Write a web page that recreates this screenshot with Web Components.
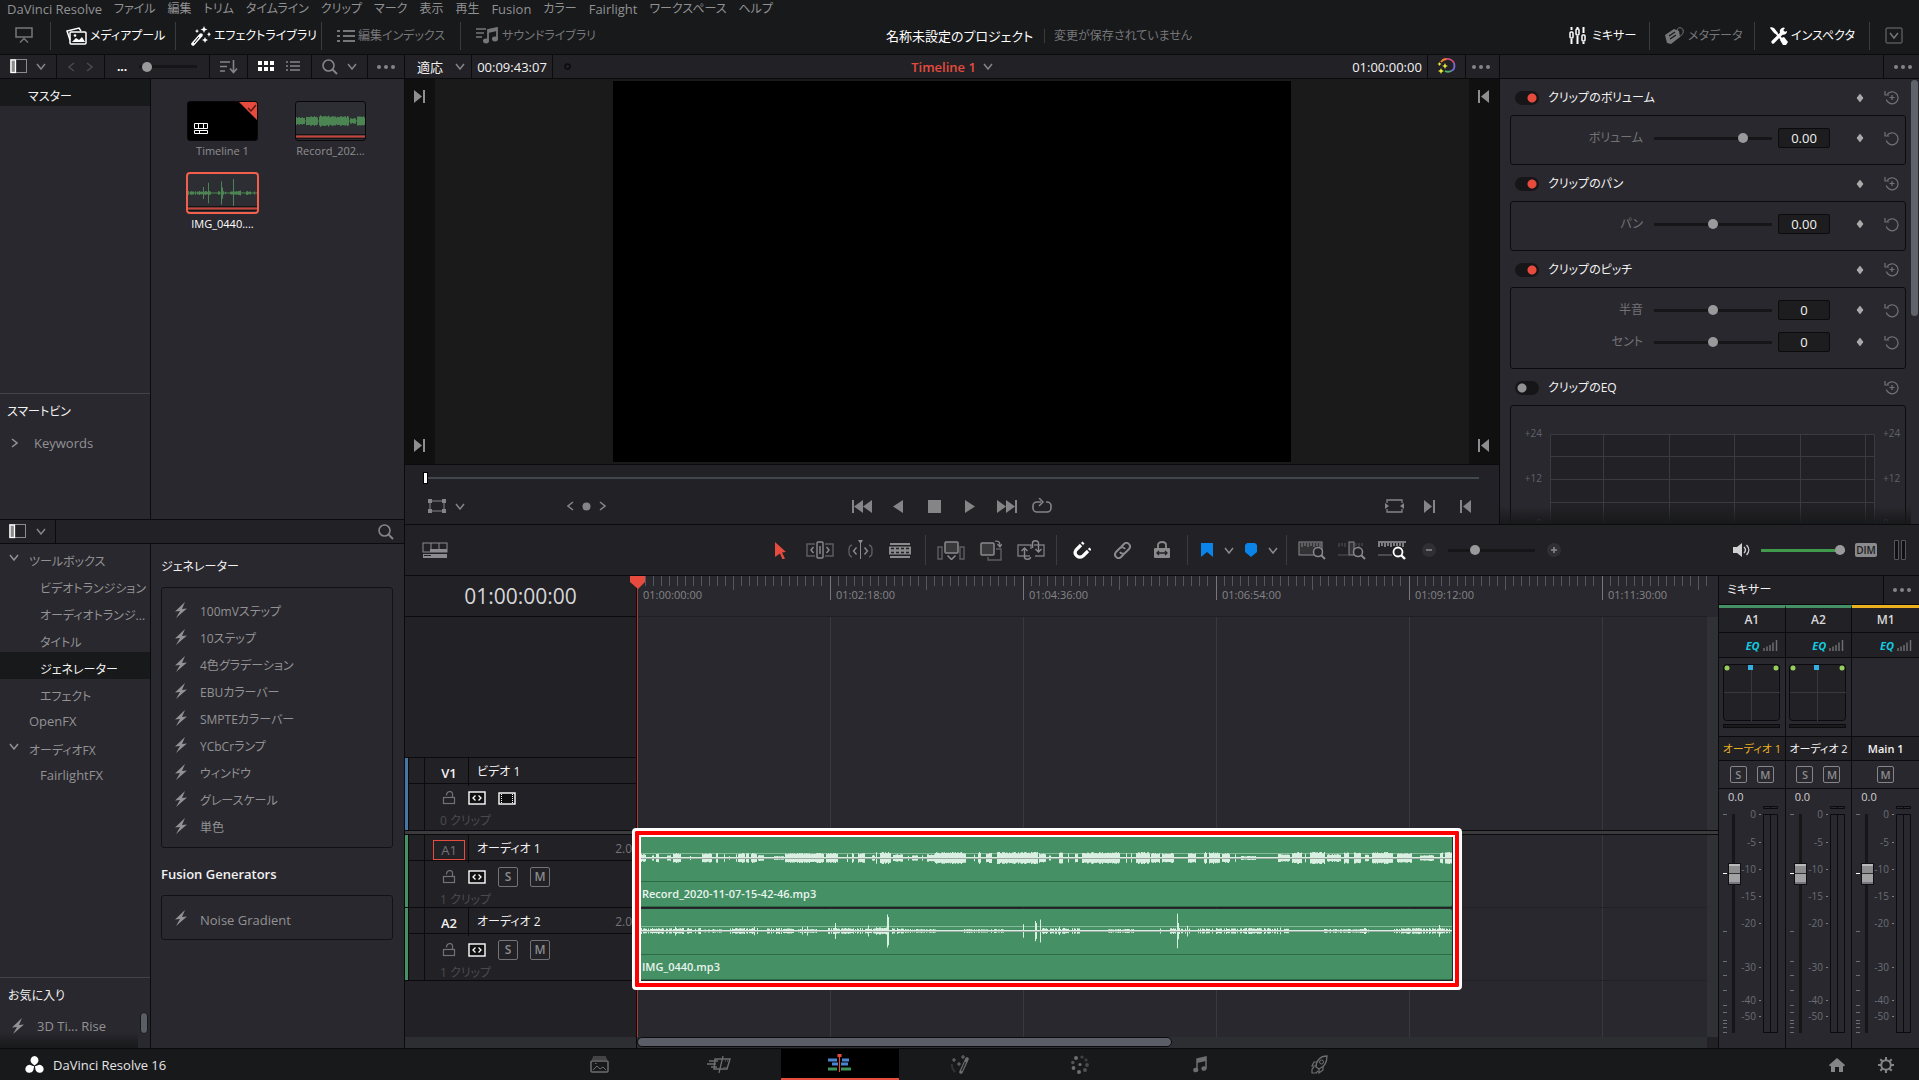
<!DOCTYPE html>
<html lang="ja">
<head>
<meta charset="utf-8">
<title>DaVinci Resolve</title>
<style>
    html, body {
        margin: 0;
        height: 100%;
        background: #18191b;
    }

    body {
        font: 12px/16px "Open Sans", "Noto Sans CJK JP", sans-serif;
        font-feature-settings: "palt";
        color: #929294;
        overflow: hidden;

        --line: #0b0b0d;
        --panel: #29282e;
        --bar: #222126;
        --dark: #18191b;
        --red: #e64b3d;
        --green: #469065;
        --bright: #f2f2f2;
    }
</style>
</head>
<body>
<resolve-app>
    <app-menu slot="menu"></app-menu>
    <app-toolbar slot="toolbar"></app-toolbar>
    <media-pool slot="pool"></media-pool>
    <effects-library slot="effects"></effects-library>
    <timeline-viewer slot="viewer"></timeline-viewer>
    <clip-inspector slot="inspector">
        <inspector-section heading="クリップのボリューム" on keyframe>
            <param-row label="ボリューム" value="0.00" position="78"></param-row>
        </inspector-section>
        <inspector-section heading="クリップのパン" on keyframe>
            <param-row label="パン" value="0.00" position="50"></param-row>
        </inspector-section>
        <inspector-section heading="クリップのピッチ" on keyframe>
            <param-row label="半音" value="0" position="50"></param-row>
            <param-row label="セント" value="0" position="50"></param-row>
        </inspector-section>
        <inspector-section heading="クリップのEQ">
            <eq-graph></eq-graph>
        </inspector-section>
    </clip-inspector>
    <edit-tools slot="tools"></edit-tools>
    <timeline-editor slot="timeline"></timeline-editor>
    <audio-mixer slot="mixer">
        <mixer-strip tag="A1" name="オーディオ 1" selected></mixer-strip>
        <mixer-strip tag="A2" name="オーディオ 2"></mixer-strip>
        <mixer-strip tag="M1" name="Main 1" main></mixer-strip>
    </audio-mixer>
    <page-switcher slot="pages"></page-switcher>
</resolve-app>

<script>
// width, height, body
const ICONS = {
    monitor: [18, 17, `<path d="M1 1h16v9H1z M5 15.500l4-4 4 4" fill="none" stroke="currentColor" stroke-width="1.500"/>`],
    media: [21, 18, `<path d="M4 13L1 4l12-3 2 3" fill="none" stroke="currentColor" stroke-width="1.500"/><rect x="4" y="5" width="16" height="12" rx="1" fill="none" stroke="currentColor" stroke-width="1.500"/><path d="M6 15l4-4 3 2 3-3 3 5z" fill="currentColor"/><circle cx="9" cy="8.500" r="1.300" fill="currentColor"/>`],
    wand: [20, 20, `<path d="M2 18L10 9" stroke="currentColor" stroke-width="3.500" stroke-linecap="round"/><path d="M3 17l5-6" stroke="#18191b" stroke-width="1"/><path d="M13 0l1 2.500 2.500 1-2.500 1-1 2.500-1-2.500-2.500-1 2.500-1z M18 6l.7 1.600 1.300.7-1.300.7L18 11l-.7-2-1.300-.7 1.300-.7z M6 3l.7 1.500L8 5l-1.300.7L6 7l-.7-1.300L4 5l1.300-.5z M14 11l.9 2.100 2.100.9-2.100.9-.9 2.100-.9-2.100L11 14l2.100-.9z" fill="currentColor"/>`],
    index: [18, 14, `<path d="M0 2h3M0 7h3M0 12h3M6 2h12M6 7h12M6 12h12" stroke="currentColor" stroke-width="1.800"/>`],
    sound: [23, 17, `<path d="M0 2h10M0 6h8M0 10h6" stroke="currentColor" stroke-width="1.600"/><path d="M12 14V3l9-2v11" fill="none" stroke="currentColor" stroke-width="1.800"/><path d="M12 3.500l9-2V4l-9 2z" fill="currentColor"/><ellipse cx="10" cy="14" rx="3" ry="2.400" fill="currentColor"/><ellipse cx="19" cy="12" rx="3" ry="2.400" fill="currentColor"/>`],
    mixer: [17, 17, `<path d="M2.500 0v3M2.500 12v5M8.500 0v2M8.500 9v8M14.500 0v6M14.500 15v2" stroke="currentColor" stroke-width="2"/><rect x="1" y="5" width="3" height="6" rx="1" fill="none" stroke="currentColor" stroke-width="1.500"/><rect x="7" y="2" width="3" height="6" rx="1" fill="none" stroke="currentColor" stroke-width="1.500"/><rect x="13" y="8" width="3" height="6" rx="1" fill="none" stroke="currentColor" stroke-width="1.500"/>`],
    tag: [20, 17, `<path d="M0 8l9-6 5 2 1 6-9 7-4-1z" fill="currentColor"/><path d="M4 9l6-4M5 12l6-4" stroke="#18191b" stroke-width="1.300"/><path d="M13 7l-1-4c1-3 5-3 6 0s-1 5-4 7" fill="none" stroke="currentColor"/>`],
    tools: [18, 18, `<path d="M1 0l3 1 4 5-1 2-3-2-4-5z" fill="currentColor"/><path d="M7 7l7 8" stroke="currentColor" stroke-width="2"/><path d="M11 11l3-1 4 5-2 3-3 0-3-5z" fill="currentColor"/><path d="M3 15L13 5" stroke="currentColor" stroke-width="3.200" stroke-linecap="round"/><path d="M15 1a3.600 3.600 0 1 0 2 3l-2.500 1-1.500-1.500z" fill="currentColor"/>`],
    boxdown: [18, 17, `<rect x="1" y="1" width="16" height="15" rx="1" fill="none" stroke="currentColor"/><path d="M5 6l4 5 4-5" fill="none" stroke="currentColor" stroke-width="1.500"/>`],
    sidebar: [17, 15, `<rect x=".5" y=".5" width="16" height="13" fill="none" stroke="#8b8b8d"/><rect x="1" y="1" width="4.500" height="12.500" fill="#8b8b8d" stroke="#fff" stroke-width="1.300"/>`],
    down: [10, 7, `<path d="M1 1l4 5 4-5" fill="none" stroke="currentColor" stroke-width="1.500"/>`],
    left: [7, 10, `<path d="M6 1L1 5l5 4" fill="none" stroke="currentColor" stroke-width="1.500"/>`],
    right: [7, 10, `<path d="M1 1l5 4-5 4" fill="none" stroke="currentColor" stroke-width="1.500"/>`],
    sort: [18, 14, `<path d="M0 2h10M0 6.500h7M0 11h5" stroke="currentColor" stroke-width="1.500"/><path d="M13.500 0v12M10 8.500l3.500 4 3.500-4" fill="none" stroke="currentColor" stroke-width="1.600"/>`],
    grid: [17, 11, `<path d="M0 0h4v4H0zM6 0h4v4H6zM12 0h4v4h-4zM0 6h4v4H0zM6 6h4v4H6zM12 6h4v4h-4z" fill="currentColor"/>`],
    list: [15, 11, `<path d="M0 1h2M0 5h2M0 9h2M4 1h10M4 5h10M4 9h10" stroke="currentColor" stroke-width="1.600"/>`],
    search: [16, 16, `<circle cx="6.500" cy="6.500" r="5.500" fill="none" stroke="currentColor" stroke-width="1.600"/><path d="M10.500 10.500l4.500 4.500" stroke="currentColor" stroke-width="2"/>`],
    dots: [18, 4, `<circle cx="2" cy="2" r="2" fill="currentColor"/><circle cx="9" cy="2" r="2" fill="currentColor"/><circle cx="16" cy="2" r="2" fill="currentColor"/>`],
    ring: [7, 7, `<circle cx="3.500" cy="3.500" r="2.500" fill="none" stroke="#0b0b0d" stroke-width="1.500"/>`],
    wheel: [19, 17, `<path d="M4 4a7 7 0 0 1 6-3" fill="none" stroke="#f08030" stroke-width="1.800"/><path d="M9 1c4-.5 7 2 8 4" fill="none" stroke="#d34a7c" stroke-width="1.800"/><path d="M17 5c1 4 0 7-3 8" fill="none" stroke="#7a6ad8" stroke-width="1.800"/><path d="M14 13c-2 1-4 1-6 0" fill="none" stroke="#4bb070" stroke-width="1.800"/><path d="M8 5l1 2.200 2 .8-2 .8L8 11l-1-2.200L5 8l2-.8zM2.500 4l.7 1.300L4.500 6l-1.300.7L2.500 8l-.7-1.300L.5 6l1.300-.7zM4 10l.9 2.100L7 13l-2.100.9L4 16l-.9-2.100L1 13l2.100-.9z" fill="#e8e83c"/>`],
    toEnd: [12, 13, `<path d="M0 0l8 6.500-8 6.500z" fill="currentColor"/><path d="M10 0v13" stroke="currentColor" stroke-width="2"/>`],
    toStart: [12, 13, `<path d="M11 0L3 6.500l8 6.500z" fill="currentColor"/><path d="M1 0v13" stroke="currentColor" stroke-width="2"/>`],
    first: [21, 13, `<path d="M1 0v13" stroke="currentColor" stroke-width="2"/><path d="M11 0L2 6.500l9 6.500zM20 0l-9 6.500 9 6.500z" fill="currentColor"/>`],
    last: [21, 13, `<path d="M20 0v13" stroke="currentColor" stroke-width="2"/><path d="M1 0l9 6.500L1 13zM10 0l9 6.500-9 6.500z" fill="currentColor"/>`],
    back: [11, 13, `<path d="M10 0L0 6.500 10 13z" fill="currentColor"/>`],
    play: [11, 13, `<path d="M0 0l10 6.500L0 13z" fill="currentColor"/>`],
    stop: [13, 13, `<path d="M0 0h13v13H0z" fill="currentColor"/>`],
    loop: [20, 16, `<path d="M9 4H5a4 4 0 0 0-4 4v2a4 4 0 0 0 4 4h10a4 4 0 0 0 4-4V8a4 4 0 0 0-4-4h-1" fill="none" stroke="currentColor" stroke-width="1.600"/><path d="M7 0l4 4-4 4" fill="none" stroke="currentColor" stroke-width="1.500"/>`],
    dot: [9, 9, `<circle cx="4.500" cy="4.500" r="4" fill="currentColor"/>`],
    transform: [18, 14, `<rect x="2" y="2" width="14" height="10" fill="none" stroke="currentColor"/><path d="M0 0h4v4H0zM14 0h4v4h-4zM0 10h4v4H0zM14 10h4v4h-4z" fill="currentColor"/>`],
    fit: [19, 14, `<path d="M2 4V1h15v3M2 10v3h15v-3" fill="none" stroke="currentColor" stroke-width="1.300"/><path d="M0 4l4 3-4 3zM19 4l-4 3 4 3z" fill="currentColor"/>`],
    diamond: [10, 12, `<path d="M5 1l4 5-4 5-4-5z" fill="#a9a9ab" stroke="#18191b" stroke-width=".8"/>`],
    reset: [15, 15, `<path d="M3 4.500A6 6 0 1 1 2.300 9.500" fill="none" stroke="currentColor" stroke-width="1.200"/><path d="M1 1v4h4" fill="none" stroke="currentColor" stroke-width="1.200"/>`],
    resetAll: [15, 15, `<path d="M3 4.500A6 6 0 1 1 2.300 9.500" fill="none" stroke="currentColor" stroke-width="1.200"/><path d="M1 1v4h4M8 5v5M5.500 7.500h5" fill="none" stroke="currentColor" stroke-width="1.200"/>`],
    bolt: [12, 16, `<path d="M10 0L0 9.500l5-.5-4 7L12 6.500 7 7z" fill="currentColor"/>`],
    options: [26, 16, `<rect x="1" y="1" width="24" height="9" fill="none" stroke="currentColor"/><path d="M9 1v6M17 1v6" stroke="currentColor"/><path d="M8 7h17v3H8zM1 12h24v4H1z" fill="currentColor"/><path d="M2 13.500h7" stroke="#222126"/>`],
    arrow: [11, 17, `<path d="M0 0l11 10-4 .5 3 6-2.500 1L5 11.500 0 15z" fill="#e64b3d"/>`],
    trim: [28, 18, `<path d="M9 3H1v12h8M19 3h8v12h-8" fill="none" stroke="#5e5e60" stroke-width="1.400"/><rect x="11" y="1" width="6" height="16" rx="1" fill="none" stroke="currentColor" stroke-width="1.400"/><path d="M14 5v8M7.500 6L5 9l2.500 3M20.500 6L23 9l-2.500 3" fill="none" stroke="currentColor" stroke-width="1.400"/>`],
    dynamic: [25, 20, `<path d="M4 5c-3 1-3 3-3 6s0 5 3 6M21 5c3 1 3 3 3 6s0 5-3 6" fill="none" stroke="#5e5e60" stroke-width="1.400"/><path d="M10 0h5l-2.500 4zM12 3h1v16h-1z" fill="currentColor"/><path d="M8.500 7.500L5.500 11l3 3.500M16.500 7.500l3 3.500-3 3.500" fill="none" stroke="currentColor" stroke-width="1.400"/>`],
    blade: [22, 15, `<path d="M1 1h20M1 14h20" stroke="currentColor" stroke-width="1.800"/><path d="M0 3.500h22v8H0z" fill="currentColor"/><path d="M2 5.500h18M2 9.500h18" stroke="#222126" stroke-width="1.500" stroke-dasharray="3 2"/>`],
    insert: [28, 19, `<rect x="8" y="1" width="13" height="11" rx="1" fill="#39393c" stroke="currentColor" stroke-width="1.500"/><path d="M5 6H1v12h4zM23 6h4v12h-4z" fill="none" stroke="#5e5e60" stroke-width="1.400"/><path d="M10.500 14.500l4 4 4-4" fill="none" stroke="currentColor" stroke-width="1.500"/>`],
    overwrite: [22, 21, `<rect x="1" y="3" width="13" height="12" rx="1" fill="#39393c" stroke="currentColor" stroke-width="1.500"/><path d="M16 9h5v11H8v-3" fill="none" stroke="#5e5e60" stroke-width="1.400"/><path d="M15 1c4 0 5 1 5 5M17.500 4l2.500 3 2-3" fill="none" stroke="currentColor" stroke-width="1.200"/>`],
    replace: [28, 20, `<path d="M13 16H1V5h13v4M17 5h10v11h-9" fill="none" stroke="#777779" stroke-width="1.400"/><path d="M7.500 18V8M4.500 11l3-3 3 3M7.500 17c0 3 6 3 6 0M21.500 3v9M18.500 9l3 3 3-3M21.500 3c0-3-6-3-6 0v5" fill="none" stroke="currentColor" stroke-width="1.400"/>`],
    magnet: [18, 18, `<path d="M8 4L3 9c-3 5 3 9 7 6l5-5" fill="none" stroke="currentColor" stroke-width="3.200"/><path d="M9 3l1.500-1.500M16 9l1.500-1.500" stroke="currentColor" stroke-width="3"/>`],
    link: [17, 17, `<g fill="none" stroke="currentColor" stroke-width="2"><path d="M7 5l3-3c3-3 8 1 5 5l-4 4c-1 1-4 1-5-1"/><path d="M10 12l-3 3c-3 3-8-1-5-5l4-4c1-1 4-1 5 1"/></g>`],
    lockpos: [16, 18, `<path d="M4 8V4c0-4 8-4 8 0v4" fill="none" stroke="currentColor" stroke-width="1.800"/><rect y="7" width="16" height="10" rx="1" fill="currentColor"/><path d="M3 12h10M5 10l-2 2 2 2M11 10l2 2-2 2" fill="none" stroke="#222126" stroke-width="1.300"/>`],
    flag: [12, 14, `<path d="M0 0h12v14l-6-5-6 5z" fill="#0a84e8"/>`],
    marker: [12, 14, `<path d="M2 0h8l2 2v7l-6 5-6-5V2z" fill="#0a84e8"/>`],
    zoomFull: [28, 19, `<rect x="1" y="1" width="23" height="13" fill="#333336" stroke="currentColor"/><path d="M4 2v4M7 2v3M10 2v4M13 2v3M16 2v4M19 2v3M22 2v4" stroke="currentColor"/><circle cx="20" cy="11" r="4.500" fill="#222126" stroke="currentColor" stroke-width="1.500"/><path d="M23 14l4 4" stroke="currentColor" stroke-width="2"/>`],
    zoomDetail: [28, 19, `<path d="M1 2v4M4 2v3M7 2v4M18 2v3M21 2v4M24 2v3M0 14h10" stroke="#555557"/><rect x="11" y="1" width="5" height="13" fill="#333336" stroke="currentColor"/><circle cx="20" cy="11" r="4.500" fill="#222126" stroke="currentColor" stroke-width="1.500"/><path d="M23 14l4 4" stroke="currentColor" stroke-width="2"/>`],
    zoomCustom: [28, 19, `<path d="M0 1h28M1 2v4M4 2v3M7 2v4M10 2v3M13 2v4M16 2v3M19 2v3M22 2v3M25 2v4" stroke="#d8d8d8"/><path d="M0 14h14" stroke="#777"/><circle cx="20" cy="11" r="4.500" fill="#222126" stroke="currentColor" stroke-width="1.800"/><path d="M23 14l4 4" stroke="currentColor" stroke-width="2.400"/>`],
    minus: [14, 14, `<circle cx="7" cy="7" r="7" fill="#303034"/><path d="M4 7h6" stroke="currentColor" stroke-width="1.500"/>`],
    plus: [14, 14, `<circle cx="7" cy="7" r="7" fill="#303034"/><path d="M4 7h6M7 4v6" stroke="currentColor" stroke-width="1.500"/>`],
    speaker: [18, 14, `<path d="M0 4h4l5-4v14l-5-4H0z" fill="currentColor"/><path d="M11 4c2 2 2 4 0 6M13.500 2c3 3 3 7 0 10" fill="none" stroke="currentColor" stroke-width="1.400"/>`],
    meters: [12, 20, `<path d="M.5.500h4v19h-4zM7.500.500h4v19h-4z" fill="#101012" stroke="#55565a"/>`],
    lock: [14, 14, `<rect x="1.500" y="6.500" width="11" height="6" fill="none" stroke="currentColor" stroke-width="1.200"/><path d="M4.500 4.500c0-5 6-5 6-1.500v3" fill="none" stroke="currentColor" stroke-width="1.200"/>`],
    auto: [18, 14, `<rect x="1" y="1" width="16" height="12" fill="#101012" stroke="#fff" stroke-width="1.400"/><path d="M7.500 4.500L5 7l2.500 2.500M10.500 4.500L13 7l-2.500 2.500" fill="none" stroke="#fff" stroke-width="1.300"/>`],
    film: [18, 13, `<rect x="1" y="1" width="16" height="11" fill="#101012" stroke="#fff" stroke-width="1.400"/><path d="M3.500 2v9M14.500 2v9" stroke="#fff" stroke-dasharray="1 1"/>`],
    signal: [15, 11, `<path d="M1 8v3M4 6.500V11M7 5v6M10 2.500V11M13.500 0v11" stroke="#6e6e72" stroke-width="1.500"/>`],
    logo: [19, 18, `<path d="M9.500 0a4.300 4.300 0 0 1 3 7c-1 1-2 1.500-3 2.500-1-1-2-1.500-3-2.500a4.300 4.300 0 0 1 3-7z"/><path d="M9.500 0a4.300 4.300 0 0 1 3 7c-1 1-2 1.500-3 2.500-1-1-2-1.500-3-2.500a4.300 4.300 0 0 1 3-7z" transform="rotate(120 9.500 10)"/><path d="M9.500 0a4.300 4.300 0 0 1 3 7c-1 1-2 1.500-3 2.500-1-1-2-1.500-3-2.500a4.300 4.300 0 0 1 3-7z" transform="rotate(240 9.500 10)"/>`],
    pageMedia: [19, 17, `<path d="M3 1h13M2 3h15" stroke="currentColor"/><rect x="1" y="5" width="17" height="11" rx="1" fill="none" stroke="currentColor" stroke-width="1.500"/><path d="M3 14l4-4 3 3 3-2 3 3M5 7.500h1.500" fill="none" stroke="currentColor"/>`],
    pageCut: [26, 17, `<path d="M8 3h15l-3 10H7z" fill="none" stroke="currentColor" stroke-width="1.400"/><path d="M16 0l-4 17M2 5h9M0 8h9M4 11h6" stroke="currentColor" stroke-width="1.300"/><path d="M18 5h4M16.500 11.500h3" stroke="currentColor" stroke-dasharray="1 1"/>`],
    pageEdit: [23, 19, `<path d="M0 6h9M14 6h7M4 10h6M13 10h7" stroke="#4a86cf" stroke-width="3"/><path d="M0 15h9M13 15h10" stroke="#3c9257" stroke-width="3"/><path d="M11.500 1v17" stroke="#e64b3d" stroke-width="1.200"/><path d="M9.500 0h4v3h-4z" fill="#e64b3d"/>`],
    pageFusion: [20, 20, `<path d="M11 17l6-13" stroke="currentColor" stroke-width="3.600" stroke-linecap="round"/><path d="M11.500 16l4-9" stroke="#222" stroke-width="1.300"/><path d="M2 5h4M4 3v4M11 2h4M13 0v4M7 9h4M9 7v4" stroke="currentColor" stroke-width="1.100"/><path d="M2 9c-1 4 1 6 3 8" fill="none" stroke="#333" stroke-width="2"/>`],
    pageColor: [18, 20, `<g fill="currentColor"><circle cx="5" cy="3" r="2"/><circle cx="11" cy="2" r="1.600" opacity=".5"/><circle cx="15" cy="5" r="1.700" opacity=".4"/><circle cx="16" cy="10" r="1.900" opacity=".6"/><circle cx="14" cy="15" r="1.900" opacity=".7"/><circle cx="8" cy="17" r="2"/><circle cx="2.500" cy="13" r="1.900"/><circle cx="1.800" cy="7.500" r="1.700" opacity=".7"/><circle cx="9" cy="9.500" r="1.600"/></g>`],
    pageFairlight: [14, 17, `<path d="M4 14V3l9-2v11" fill="none" stroke="currentColor" stroke-width="1.500"/><path d="M4 3l9-2v4L4 7z" fill="currentColor"/><ellipse cx="2.800" cy="14" rx="2.600" ry="2.300" fill="currentColor"/><ellipse cx="11" cy="12.500" rx="2.600" ry="2.300" fill="currentColor"/>`],
    pageDeliver: [17, 19, `<path d="M5 12c0-6 4-11 11-11 0 6-3 11-8 13z" fill="none" stroke="currentColor" stroke-width="1.300"/><circle cx="10.500" cy="7" r="2" fill="none" stroke="currentColor"/><path d="M6 7H3l-2 4 4 0M12 11v4l-4 3 0-4M1 14v4h4M3 12l-2 2M7 16l-2 2" fill="none" stroke="currentColor" stroke-width="1.200"/>`],
    home: [16, 14, `<path d="M8 0l8 7-1 1.500-1-.7V14h-4V9H6v5H2V7.800l-1 .7L0 7z" fill="currentColor"/>`],
    gear: [16, 16, `<circle cx="8" cy="8" r="4.800" fill="none" stroke="currentColor" stroke-width="2"/><path d="M8 0v3M8 13v3M0 8h3M13 8h3M2.300 2.300l2 2M11.700 11.700l2 2M2.300 13.700l2-2M11.700 4.300l2-2" stroke="currentColor" stroke-width="2"/>`]
};

const BASE = `
    * { box-sizing: border-box; }
    button, input { font: inherit; color: inherit; margin: 0; padding: 0; border: 0; background: none; }
    button { display: inline-flex; align-items: center; justify-content: center; white-space: nowrap; font-feature-settings: "palt"; }
    h2, h3, ul, nav { margin: 0; padding: 0; font: inherit; list-style: none; }
    a { color: inherit; text-decoration: none; }
    .slider { appearance: none; height: 14px; background: linear-gradient(#161618, #161618) center / 100% 3px no-repeat; }
    .slider::-webkit-slider-thumb { appearance: none; width: 10px; height: 10px; border-radius: 50%; background: #9a9a9c; }
`;

class BaseElement extends HTMLElement {
    constructor() {
        super();
        this.attachShadow({ mode: "open" });
    }

    connectedCallback() {
        const template = document.createElement("template");
        template.innerHTML = `<style>${BASE}${this.styles()}</style>${this.markup()}`;
        this.shadowRoot.replaceChildren(template.content.cloneNode(true));
    }

    attr(name) {
        return this.getAttribute(name) || "";
    }
}

class UiIcon extends BaseElement {
    styles() {
        return `:host { display: inline-flex; flex: none; } svg { display: block; }`;
    }

    markup() {
        const [w, h, body] = ICONS[this.attr("name")];
        return `<svg width="${w}" height="${h}" viewBox="0 0 ${w} ${h}" fill="currentColor" aria-hidden="true">${body}</svg>`;
    }
}

class ResolveApp extends BaseElement {
    styles() {
        return `
        :host { display: grid; height: 100vh; grid-template-rows: 17px 38px minmax(0, 1fr) 31px; }
        .main { display: grid; grid-template-columns: 405px minmax(0, 1fr); grid-template-rows: minmax(0, 1fr); min-height: 0; }
        .left { display: grid; grid-template-rows: minmax(0, 465fr) minmax(0, 529fr); border-right: 1px solid var(--line); min-height: 0; }
        .right { display: grid; grid-template-rows: minmax(0, 470fr) 51px minmax(0, 473fr); min-height: 0; }
        .upper { display: grid; grid-template-columns: minmax(0, 1fr) 419px; grid-template-rows: minmax(0, 1fr); }
        .lower { display: grid; grid-template-columns: minmax(0, 1fr) 200px; grid-template-rows: minmax(0, 1fr); }`;
    }

    markup() {
        return `
        <slot name="menu"></slot>
        <slot name="toolbar"></slot>
        <div class="main">
            <div class="left"><slot name="pool"></slot><slot name="effects"></slot></div>
            <div class="right">
                <div class="upper"><slot name="viewer"></slot><slot name="inspector"></slot></div>
                <slot name="tools"></slot>
                <div class="lower"><slot name="timeline"></slot><slot name="mixer"></slot></div>
            </div>
        </div>
        <slot name="pages"></slot>`;
    }
}

class AppMenu extends BaseElement {
    styles() {
        return `
        :host { display: block; background: var(--dark); color: #919193; }
        nav { display: flex; gap: 12px; padding-left: 7px; height: 17px; align-items: center; }
        .latin { font-size: 13px; }`;
    }

    markup() {
        const items = ["DaVinci Resolve", "ファイル", "編集", "トリム", "タイムライン", "クリップ", "マーク", "表示", "再生", "Fusion", "カラー", "Fairlight", "ワークスペース", "ヘルプ"];
        return `<nav>${items.map(t => `<button class="${/^[A-Z]/.test(t) ? "latin" : ""}">${t}</button>`).join("")}</nav>`;
    }
}

class AppToolbar extends BaseElement {
    styles() {
        return `
        :host { display: grid; grid-template-columns: 1fr auto 1fr; align-items: center; background: var(--dark); border-bottom: 1px solid var(--line); }
        .group { display: flex; align-items: center; }
        .group button { height: 28px; gap: 3px; justify-content: flex-start; padding-left: 15px; border-left: 1px solid #3a3b3e; color: #77777a; width: 105px; }
        .group button.plain { border-left: 0; width: 50px; }
        .group button.wide { width: 125px; }
        .group button.wider { width: 146px; }
        .group button.box { width: 50px; }
        .group button.on { color: #fff; }
        h2 { color: #fff; font-size: 13px; }
        .rest { display: flex; align-items: center; justify-content: space-between; }
        .status { border-left: 1px solid #3a3b3e; margin-left: 11px; padding-left: 9px; line-height: 14px; color: #77777a; }`;
    }

    markup() {
        return `
        <div class="group">
            <button class="plain" aria-label="表示"><ui-icon name="monitor"></ui-icon></button>
            <button class="wide on"><ui-icon name="media"></ui-icon>メディアプール</button>
            <button class="wider on"><ui-icon name="wand"></ui-icon>エフェクトライブラリ</button>
            <button class="wider" style="width: 139px"><ui-icon name="index"></ui-icon>編集インデックス</button>
            <button class="wider"><ui-icon name="sound"></ui-icon>サウンドライブラリ</button>
        </div>
        <h2>名称未設定のプロジェクト</h2>
        <div class="rest">
            <span class="status">変更が保存されていません</span>
            <div class="group">
                <button class="plain on" style="width: 95px; gap: 6px"><ui-icon name="mixer"></ui-icon>ミキサー</button>
                <button><ui-icon name="tag"></ui-icon>メタデータ</button>
                <button class="on" style="width: 115px"><ui-icon name="tools"></ui-icon>インスペクタ</button>
                <button class="box" aria-label="パネル"><ui-icon name="boxdown"></ui-icon></button>
            </div>
        </div>`;
    }
}

const BAR = `
    .bar { display: flex; height: 24px; flex: none; background: var(--bar); border-bottom: 1px solid var(--line); color: #858587; }
    .seg { display: flex; align-items: center; justify-content: space-evenly; border-right: 1px solid var(--line); }
    .seg:last-child { border-right: 0; }
`;

// One column per pixel; each block is [start, width, half height].
function wavePath(blocks, mid, jitter) {
    let seed = 7;
    const random = () => (seed = (seed * 16807) % 2147483647) / 2147483647;
    let d = "";
    for (const [x, w, h] of blocks) {
        for (let i = 0; i < w; i++) {
            const r = h * (1 - jitter * random());
            if (w > 1 && jitter > 0.3 && random() < 0.25) continue;
            d += `M${x + i} ${(mid - r).toFixed(1)}h1v${(2 * r).toFixed(1)}h-1z`;
        }
    }
    return d;
}

class MediaThumb extends BaseElement {
    styles() {
        return `
        :host { display: block; width: 73px; color: #8f8f91; font-size: 11px; text-align: center; }
        button { position: relative; width: 71px; height: 40px; border: 1px solid #08080a; border-radius: 3px; background: #2c2e33; overflow: hidden; display: block; margin: 1px; }
        :host([kind=timeline]) button { background: #000; }
        :host([selected]) { color: #fff; }
        :host([selected]) button { width: 73px; height: 42px; margin: 0; border: 2px solid #f25f4c; border-radius: 4px; }
        svg { display: block; width: 100%; height: 100%; }
        span { display: block; margin-top: 2px; }`;
    }

    markup() {
        let art;
        if (this.attr("kind") == "timeline") {
            art = `<svg viewBox="0 0 69 38"><path d="M51 0h18v18z" fill="#e64b3d"/><path d="M60 6l3 3 5-6" fill="none" stroke="#5a1712" stroke-width="1.500"/><path d="M6.500 21.500h13v5h-13zM10.500 21.500v5M15.500 21.500v5M6.500 28.500h13v3h-13zM11.500 28.500v3" fill="none" stroke="#fff"/></svg>`;
        } else {
            const loud = this.attr("kind") == "loud";
            const blocks = loud
                ? [[0, 9, 4], [10, 12, 5], [23, 10, 6], [33, 20, 5], [54, 6, 3], [61, 8, 5]]
                : [[0, 25, 2], [30, 8, 2], [42, 10, 2], [55, 14, 2], [15, 1, 7], [20, 1, 16], [33, 1, 12], [34, 1, 7], [45, 1, 14], [52, 1, 4]];
            art = `<svg viewBox="0 0 69 38"><path d="${wavePath(blocks, 19, loud ? 0.3 : 0.4)}" fill="#4d8453"/><path d="M0 19h69" stroke="#4d8453"/><path d="M0 34.500h69" stroke="#c4443a" stroke-width="2"/><path d="M0 32.500h69M0 36.500h69" stroke="#141416"/></svg>`;
        }
        return `<button aria-label="${this.attr("label")}">${art}</button><span>${this.attr("label")}</span>`;
    }
}

class MediaPool extends BaseElement {
    styles() {
        return `${BAR}
        :host { display: flex; flex-direction: column; background: var(--panel); border-bottom: 1px solid var(--line); min-height: 0; }
        .body { display: grid; grid-template-columns: 151px 1fr; flex: 1; min-height: 0; }
        .tree { display: grid; grid-template-rows: 314fr 126fr; border-right: 1px solid var(--line); }
        .root { width: 100%; height: 27px; padding: 8px 0 0 28px; justify-content: flex-start; background: var(--dark); color: var(--bright); }
        .smart { border-top: 1px solid #424247; padding: 10px 7px; }
        h3 { color: var(--bright); }
        .smart button { margin-top: 15px; gap: 16px; padding-left: 4px; font-size: 13px; }
        .clips { display: grid; grid-template-columns: 73px 73px; gap: 13px 35px; align-content: start; padding: 21px 35px; }
        .on { color: #fff; }`;
    }

    markup() {
        return `
        <div class="bar">
            <div class="seg" style="width: 57px"><ui-icon name="sidebar"></ui-icon><ui-icon name="down"></ui-icon></div>
            <div class="seg" style="width: 48px; color: #4a4a4d"><ui-icon name="left"></ui-icon><ui-icon name="right"></ui-icon></div>
            <div class="seg" style="width: 105px"><b class="on">...</b><input class="slider" type="range" value="6" style="width: 58px" aria-label="サムネイルサイズ"></div>
            <div class="seg" style="width: 38px"><ui-icon name="sort"></ui-icon></div>
            <div class="seg" style="width: 64px"><ui-icon class="on" name="grid"></ui-icon><ui-icon name="list"></ui-icon></div>
            <div class="seg" style="width: 56px"><ui-icon name="search"></ui-icon><ui-icon name="down"></ui-icon></div>
            <div class="seg" style="flex: 1"><ui-icon name="dots"></ui-icon></div>
        </div>
        <div class="body">
            <div class="tree">
                <div><button class="root">マスター</button></div>
                <div class="smart">
                    <h3>スマートビン</h3>
                    <button><ui-icon name="right"></ui-icon>Keywords</button>
                </div>
            </div>
            <div class="clips">
                <media-thumb kind="timeline" label="Timeline 1"></media-thumb>
                <media-thumb kind="loud" label="Record_202..."></media-thumb>
                <media-thumb kind="quiet" label="IMG_0440...." selected></media-thumb>
            </div>
        </div>`;
    }
}

class EffectsLibrary extends BaseElement {
    styles() {
        return `${BAR}
        :host { display: flex; flex-direction: column; background: var(--panel); min-height: 0; border-bottom: 1px solid var(--line); }
        .bar { justify-content: space-between; padding-right: 10px; }
        .body { display: grid; grid-template-columns: 151px 1fr; grid-template-rows: minmax(0, 1fr); flex: 1; min-height: 0; }
        .tree { display: flex; flex-direction: column; min-height: 0; border-right: 1px solid var(--line); }
        .tree ul { flex: 1; min-height: 0; }
        .tree li button { width: 100%; height: 27px; justify-content: flex-start; padding: 0 0 0 40px; }
        .tree li button.top { padding-left: 29px; }
        .tree li button.open { padding-left: 9px; gap: 10px; }
        .tree li button.on { background: var(--dark); color: var(--bright); }
        .tree li span { padding-top: 8px; }
        .tree li .latin span { padding-top: 3px; }
        .latin { font-size: 13px; }
        .favs { position: relative; flex: none; height: 71px; border-top: 1px solid #424247; padding: 10px 8px 0; overflow: hidden; }
        .favs h3 { margin-bottom: 8px; }
        .favs button { display: flex; height: 28px; gap: 13px; padding-left: 4px; }
        .favs i { position: absolute; right: 2px; top: 34px; width: 8px; height: 22px; border-radius: 4px; border: 1px solid #18191b; background: #5b5e66; }
        .favs::after { content: ""; position: absolute; inset: auto 12px 0 0; height: 16px; background: linear-gradient(transparent, #18191b); }
        h3 { color: var(--bright); }
        .list { padding: 15px 11px 0 10px; min-height: 0; }
        .list ul { border: 1px solid #121214; border-radius: 3px; padding: 8px 13px; }
        .list li button { height: 27px; gap: 13px; }
        .list li span { padding-top: 4px; }
        .list h3 { margin-bottom: 12px; }
        .list ul + h3 { margin: 18px 0 13px; font-weight: 600; font-size: 13px; }`;
    }

    markup() {
        const tree = [
            ["open", "ツールボックス"], ["", "ビデオトランジション"], ["", "オーディオトランジ..."], ["", "タイトル"],
            ["on", "ジェネレーター"], ["", "エフェクト"], ["top latin", "OpenFX"], ["open", "オーディオFX"], ["latin", "FairlightFX"]
        ];
        const items = ["100mVステップ", "10ステップ", "4色グラデーション", "EBUカラーバー", "SMPTEカラーバー", "YCbCrランプ", "ウィンドウ", "グレースケール", "単色"];
        const entry = t => `<li><button><ui-icon name="bolt"></ui-icon><span>${t}</span></button></li>`;
        return `
        <div class="bar">
            <div class="seg" style="width: 56px; border-right: 1px solid var(--line)"><ui-icon name="sidebar"></ui-icon><ui-icon name="down"></ui-icon></div>
            <button aria-label="検索"><ui-icon name="search"></ui-icon></button>
        </div>
        <div class="body">
            <div class="tree">
                <ul>${tree.map(([c, t]) => `<li><button class="${c}">${c == "open" ? `<ui-icon name="down"></ui-icon>` : ""}<span>${t}</span></button></li>`).join("")}</ul>
                <div class="favs">
                    <h3>お気に入り</h3>
                    <button class="latin"><ui-icon name="bolt"></ui-icon>3D Ti... Rise</button>
                    <button aria-label="お気に入り"><ui-icon name="bolt"></ui-icon></button>
                    <i></i>
                </div>
            </div>
            <div class="list">
                <h3>ジェネレーター</h3>
                <ul>${items.map(entry).join("")}</ul>
                <h3>Fusion Generators</h3>
                <ul class="latin">${entry("Noise Gradient")}</ul>
            </div>
        </div>`;
    }
}

class TimelineViewer extends BaseElement {
    styles() {
        return `${BAR}
        :host { display: flex; flex-direction: column; background: var(--bar); border-right: 1px solid var(--line); border-bottom: 1px solid var(--line); min-height: 0; }
        .bar { display: grid; grid-template-columns: 1fr auto 1fr; }
        .bar > div { display: flex; }
        .bar > div:last-child { justify-content: flex-end; }
        .time { color: var(--bright); font-size: 13px; }
        .fit { width: 67px; justify-content: space-between; padding: 0 6px 0 12px; }
        .fit span { color: var(--bright); font-size: 13px; }
        .title { color: var(--red); font-weight: 600; font-size: 13px; gap: 7px; }
        .title ui-icon { color: #858587; }
        .stage { flex: 1; min-height: 0; display: grid; grid-template-columns: 30px 1fr 30px; grid-template-rows: minmax(0, 1fr); background: #1a1a1a; border-bottom: 1px solid var(--line); color: #8e8e90; }
        .side { background: #101010; display: flex; flex-direction: column; justify-content: space-between; align-items: center; padding: 11px 0 12px; }
        .picture { display: flex; justify-content: center; padding: 2px 0; min-height: 0; }
        .picture div { height: 100%; aspect-ratio: 16 / 9; background: #000; }
        .scrub { appearance: none; display: block; flex: none; height: 12px; margin: 7px 20px 0 18px; background: linear-gradient(#424850, #424850) center / 100% 2px no-repeat; }
        .scrub::-webkit-slider-thumb { appearance: none; width: 5px; height: 12px; background: #fff; border: 1px solid #000; }
        .transport { display: grid; flex: none; grid-template-columns: 1fr auto 1fr; align-items: center; height: 40px; padding: 4px 15px 0; color: #858587; }
        .transport div { display: flex; align-items: center; }
        .transport > div:first-child { padding-left: 8px; gap: 6px; }
        .transport > div:last-child { justify-content: flex-end; }
        .transport button { width: 36px; height: 24px; }
        .transport button.slim { width: 16px; }
        .transport .keys { margin-left: 88px; }`;
    }

    markup() {
        const b = (n, c = "") => `<button class="${c}" aria-label="${n}"><ui-icon name="${n}"></ui-icon></button>`;
        return `
        <div class="bar">
            <div>
                <div class="seg fit"><span>適応</span><ui-icon name="down"></ui-icon></div>
                <div class="seg time" style="width: 81px">00:09:43:07</div>
                <div class="seg" style="width: 28px"><ui-icon name="ring"></ui-icon></div>
            </div>
            <button class="title">Timeline 1<ui-icon name="down"></ui-icon></button>
            <div>
                <div class="seg time" style="width: 81px">01:00:00:00</div>
                <div class="seg" style="width: 38px"><ui-icon name="wheel"></ui-icon></div>
                <div class="seg" style="width: 33px; padding-right: 4px"><ui-icon name="dots"></ui-icon></div>
            </div>
        </div>
        <div class="stage">
            <div class="side"><ui-icon name="toEnd"></ui-icon><ui-icon name="toEnd"></ui-icon></div>
            <div class="picture"><div></div></div>
            <div class="side"><ui-icon name="toStart"></ui-icon><ui-icon name="toStart"></ui-icon></div>
        </div>
        <input class="scrub" type="range" value="0" aria-label="再生位置">
        <div class="transport">
            <div>
                <ui-icon name="transform"></ui-icon>
                ${b("down", "slim")}
                <div class="keys">${b("left", "slim")}${b("dot", "slim")}${b("right", "slim")}</div>
            </div>
            <div>${["first", "back", "stop", "play", "last", "loop"].map(n => b(n)).join("")}</div>
            <div>${b("fit")}${b("toEnd")}${b("toStart")}</div>
        </div>`;
    }
}

class ClipInspector extends BaseElement {
    styles() {
        return `${BAR}
        :host { display: flex; flex-direction: column; background: var(--panel); border-bottom: 1px solid var(--line); min-height: 0; overflow: hidden; }
        .bar { justify-content: flex-end; }
        .seg { width: 36px; padding-left: 2px; border-left: 1px solid var(--line); }
        .scroller { position: relative; flex: 1; min-height: 0; overflow: hidden; padding: 0 13px 0 10px; }
        .thumb { position: absolute; top: 1px; right: 1px; width: 7px; height: 53%; border-radius: 4px; background: #5f636b; }
        .fade { position: absolute; inset: auto 8px 0 0; height: 18px; background: linear-gradient(transparent, #18191b); }`;
    }

    markup() {
        return `
        <div class="bar"><div class="seg"><ui-icon name="dots"></ui-icon></div></div>
        <div class="scroller"><slot></slot><div class="thumb"></div><div class="fade"></div></div>`;
    }
}

class InspectorSection extends BaseElement {
    styles() {
        return `
        :host { display: block; color: #737376; }
        header { display: flex; align-items: center; height: 36px; padding: 1px 7px 0 5px; }
        label { flex: 1; display: flex; align-items: center; gap: 9px; color: var(--bright); }
        input { appearance: none; width: 24px; height: 14px; border-radius: 7px; background: radial-gradient(circle at 7px 7px, #929294 4px, #161618 5px); }
        input:checked { background: radial-gradient(circle at 17px 7px, var(--red) 4px, #161618 5px); }
        .key { width: 24px; margin-right: 12px; }
        .box { border: 1px solid var(--line); border-radius: 3px; min-height: 50px; padding: 6px 6px 10px 7px; }`;
    }

    markup() {
        const key = this.hasAttribute("keyframe") ? `<button class="key" aria-label="キーフレーム"><ui-icon name="diamond"></ui-icon></button>` : "";
        return `
        <header>
            <label><input type="checkbox" ${this.hasAttribute("on") ? "checked" : ""}>${this.attr("heading")}</label>
            ${key}
            <button aria-label="リセット"><ui-icon name="resetAll"></ui-icon></button>
        </header>
        <div class="box"><slot></slot></div>`;
    }
}

class ParamRow extends BaseElement {
    styles() {
        return `
        :host { display: flex; align-items: center; height: 32px; color: #737376; }
        label { flex: 1; text-align: right; padding-right: 11px; }
        .slider { width: 118px; margin-right: 6px; }
        .value { width: 52px; height: 20px; margin-right: 18px; border: 1px solid var(--line); border-radius: 2px; background: #1d1d1f; color: var(--bright); text-align: center; font-size: 13px; }
        .key { width: 24px; margin-right: 12px; }`;
    }

    markup() {
        return `
        <label for="value">${this.attr("label")}</label>
        <input class="slider" type="range" value="${this.attr("position")}" aria-label="${this.attr("label")}">
        <input class="value" id="value" value="${this.attr("value")}">
        <button class="key" aria-label="キーフレーム"><ui-icon name="diamond"></ui-icon></button>
        <button aria-label="リセット"><ui-icon name="reset"></ui-icon></button>`;
    }
}

class EqGraph extends BaseElement {
    styles() {
        return `
        :host { display: grid; grid-template-columns: 24px 1fr 16px; gap: 8px; padding-top: 22px; height: 160px; color: #5f636b; font-size: 10px; line-height: 12px; }
        .scale { display: flex; flex-direction: column; gap: 33px; margin-top: -7px; text-align: right; }
        .scale:last-child { text-align: left; }
        svg { display: block; width: 100%; height: 130px; background: var(--bar); }`;
    }

    markup() {
        const v = [53, 119, 184, 250, 315].map(x => `<path d="M${x}.500 0v130"/>`).join("");
        const h = [22, 45, 68, 91, 114].map(y => `<path d="M0 ${y}.500h325"/>`).join("");
        const scale = `<div class="scale"><span>+24</span><span>+12</span><span>0</span></div>`;
        return `${scale}<svg viewBox="0 0 325 130" preserveAspectRatio="none" stroke="#3a3b3f" fill="none"><path d="M.5 130V.500h324V130"/>${v}${h}</svg>${scale}`;
    }
}

class EditTools extends BaseElement {
    styles() {
        return `
        :host { display: grid; grid-template-columns: 1fr auto 1fr; align-items: center; background: var(--bar); border-bottom: 1px solid var(--line); color: #8b8b8d; }
        div { display: flex; align-items: center; }
        .left { padding-left: 17px; }
        .right { justify-content: flex-end; gap: 10px; padding-right: 13px; color: #d0d0d2; }
        button { width: 40px; height: 30px; }
        .narrow { width: 28px; }
        .slim { width: 16px; }
        .round { width: 14px; }
        hr { width: 1px; height: 30px; margin: 0 5px; border: 0; background: #3c3c40; }
        .on { color: #fff; }
        .zoom { gap: 12px; padding: 0 3px 0 10px; }
        .volume { width: 84px; background-image: linear-gradient(#3f9a4c, #3f9a4c); }
        .dim { width: 22px; height: 14px; margin-right: 7px; border-radius: 2px; background: #8b8b8d; color: #1a1a1c; font-size: 10px; line-height: 14px; font-weight: 600; }`;
    }

    markup() {
        const b = (n, c = "") => `<button class="${c}" aria-label="${n}"><ui-icon name="${n}"></ui-icon></button>`;
        return `
        <div class="left"><ui-icon name="options"></ui-icon></div>
        <div>
            ${["arrow", "trim", "dynamic", "blade"].map(n => b(n)).join("")}<hr>
            ${["insert", "overwrite", "replace"].map(n => b(n)).join("")}<hr>
            ${b("magnet", "on")}${b("link")}${b("lockpos")}<hr>
            ${b("flag", "narrow")}${b("down", "slim")}${b("marker", "narrow")}${b("down", "slim")}<hr>
            ${b("zoomFull")}${b("zoomDetail")}${b("zoomCustom", "on")}
            <div class="zoom">${b("minus", "round")}<input class="slider" type="range" value="29" style="width: 87px" aria-label="ズーム">${b("plus", "round")}</div>
        </div>
        <div class="right">
            <ui-icon name="speaker"></ui-icon>
            <input class="slider volume" type="range" value="100" aria-label="音量">
            <button class="dim">DIM</button>
            <ui-icon name="meters"></ui-icon>
        </div>`;
    }
}

class TrackHeader extends BaseElement {
    styles() {
        return `
        :host { display: grid; grid-template-columns: 4px 16px 1fr; height: 73px; flex: none; border-bottom: 1px solid var(--line); color: #737376; overflow: hidden; --strip: var(--green); }
        :host([kind=video]) { border-top: 1px solid var(--line); border-bottom: 0; --strip: #4677a4; }
        .strip { background: var(--strip); border-right: 1px solid var(--line); }
        .gutter { border-right: 1px solid var(--line); background: linear-gradient(var(--line), var(--line)) 0 25px / 100% 1px no-repeat; }
        .top { display: grid; grid-template-columns: 44px 1fr auto; height: 26px; border-bottom: 1px solid var(--line); line-height: 28px; }
        .tag { display: flex; align-items: center; justify-content: center; padding: 1px 0 0 5px; border-right: 1px solid var(--line); color: var(--bright); font-size: 13px; font-weight: 600; line-height: 18px; }
        .name { padding-left: 8px; color: var(--bright); }
        .format { padding-right: 4px; }
        :host([target]) .tag span { width: 32px; height: 20px; border: 1px solid var(--red); text-align: center; color: #737376; font-weight: 400; }
        .controls { display: flex; align-items: center; gap: 12px; height: 32px; padding-left: 17px; }
        :host([kind=video]) .controls { height: 28px; }
        .controls button { width: 20px; height: 20px; border: 1px solid #737376; border-radius: 2px; color: #8b8b8d; font-weight: 600; }
        .count { padding-left: 15px; line-height: 14px; color: #4b4b4f; }
        :host([kind=video]) .count { line-height: 18px; }`;
    }

    markup() {
        const video = this.attr("kind") == "video";
        return `
        <div class="strip"></div><div class="gutter"></div>
        <div>
            <div class="top"><div class="tag"><span>${this.attr("tag")}</span></div><div class="name">${this.attr("name")}</div><div class="format">${video ? "" : "2.0"}</div></div>
            <div class="controls">
                <ui-icon name="lock"></ui-icon><ui-icon name="auto"></ui-icon>
                ${video ? `<ui-icon name="film"></ui-icon>` : `<button>S</button><button>M</button>`}
            </div>
            <div class="count">${this.attr("count")}</div>
        </div>`;
    }
}

const WAVES = {
    voice: [
        [3, 5, 4], [14, 2, 3], [18, 3, 5], [29, 4, 3], [35, 8, 5], [52, 1, 2], [64, 10, 5], [78, 2, 5], [86, 1, 4], [91, 1, 2],
        [98, 1, 4], [100, 7, 5], [108, 3, 5], [113, 6, 5], [120, 6, 3], [136, 10, 2], [147, 39, 5], [188, 12, 5], [209, 1, 5], [214, 2, 5],
        [220, 7, 5], [234, 3, 3], [238, 1, 7], [242, 11, 6], [255, 10, 4], [270, 1, 3], [274, 6, 3], [284, 1, 3], [289, 8, 4],
        [297, 31, 6], [336, 1, 4], [340, 3, 6], [348, 6, 5], [359, 41, 6], [401, 7, 5], [411, 2, 3], [421, 4, 6], [430, 1, 5], [437, 3, 5],
        [444, 38, 6], [488, 1, 6], [493, 1, 5], [498, 14, 6], [513, 9, 5], [524, 12, 5], [550, 8, 5], [566, 3, 6], [571, 11, 6], [584, 8, 5],
        [597, 1, 5], [603, 15, 2], [640, 12, 4], [654, 10, 6], [667, 1, 5], [672, 15, 6], [689, 14, 4], [706, 5, 6], [716, 7, 6], [727, 4, 4],
        [734, 21, 6], [759, 15, 5], [782, 14, 3], [802, 3, 6], [807, 7, 6]
    ],
    quiet: [
        [3, 60, 3], [38, 1, 4], [64, 20, 2], [92, 30, 3], [128, 28, 3], [160, 20, 2], [190, 12, 3], [200, 50, 3], [238, 12, 4], [254, 12, 3],
        [37, 1, 5], [116, 1, 5], [164, 1, 4], [169, 1, 6], [197, 1, 11], [230, 1, 6], [249, 1, 18], [250, 1, 18], [262, 36, 2], [326, 28, 2], [356, 10, 2],
        [385, 1, 9], [397, 1, 14], [398, 1, 8], [402, 1, 12], [404, 38, 3], [421, 1, 6], [470, 26, 2], [522, 3, 3], [532, 20, 3],
        [539, 1, 18], [540, 1, 12], [549, 1, 7], [560, 80, 3], [642, 1, 5], [646, 5, 3], [668, 3, 1], [686, 46, 2], [726, 3, 3], [756, 56, 3], [801, 1, 6]
    ]
};

class AudioClip extends BaseElement {
    styles() {
        return `
        :host { display: flex; flex-direction: column; height: 71px; margin: 0 5px 2px 1px; border-radius: 2px; background: var(--green); border-bottom: 1px solid #2d6b47; color: #e9f5ee; overflow: hidden; }
        svg { display: block; flex: none; width: 100%; height: 45px; }
        span { flex: 1; padding-left: 4px; border-top: 1px solid #2d6b47; font-size: 11px; line-height: 24px; font-weight: 600; }`;
    }

    markup() {
        const kind = this.attr("wave");
        return `
        <svg viewBox="0 0 814 45" preserveAspectRatio="none">
            <path d="M0 17.500h814" stroke="#86b99a"/>
            <path d="${wavePath(WAVES[kind], 22, kind == "voice" ? 0.25 : 0.35)}" fill="#d9efe2"/>
            <path d="M0 21.500h814" stroke="#d9efe2"/>
            <path d="M0 22.500h814" stroke="#9fa9a3"/>
        </svg>
        <span>${this.attr("label")}</span>`;
    }
}

class TimelineEditor extends BaseElement {
    styles() {
        return `
        :host { display: grid; grid-template-columns: 232px minmax(0, 1fr) 12px; grid-template-rows: 41px minmax(0, 1fr) 11px; background: var(--panel); min-height: 0; overflow: hidden; position: relative; border-bottom: 1px solid var(--line); }
        .clock { display: flex; align-items: center; justify-content: center; background: var(--bar); border-right: 1px solid var(--line); border-bottom: 1px solid var(--line); font-size: 21px; color: #d6d6d8; }
        .ruler { display: flex; overflow: hidden; border-bottom: 1px solid #1f1f23; }
        .cell { flex: none; width: 193px; height: 39px; }
        .cell svg { display: block; height: 11px; overflow: visible; }
        .cell span { display: block; padding-left: 6px; font-size: 11px; line-height: 15px; color: #858587; }
        .heads, .lanes, .vscroll { display: grid; grid-template-rows: minmax(0, 214fr) 5px minmax(0, 202fr); min-height: 0; }
        .heads { background: var(--bar); border-right: 1px solid var(--line); }
        .heads div:first-child { display: flex; flex-direction: column; justify-content: flex-end; }
        .lanes { position: relative; background: repeating-linear-gradient(90deg, #38383d 0 1px, transparent 1px 193px); }
        .splitter { border: solid var(--line); border-width: 1px 0; background: #3b3b3d; }
        .audio { padding-top: 1px; background: linear-gradient(#222226, #222226) 0 72px / 100% 1px no-repeat, linear-gradient(#222226, #222226) 0 145px / 100% 1px no-repeat; }
        .selection { position: relative; width: 820px; height: 146px; z-index: 1; }
        .frame { position: absolute; inset: -8px -5px; border: 3px solid #fff; border-radius: 4px; box-shadow: inset 0 0 0 4px #f00, inset 0 0 0 6px #fff; }
        .playhead { position: absolute; top: 0; bottom: 11px; left: 225px; width: 15px; background: linear-gradient(#a83a32, #a83a32) 7px 0 / 1px 100% no-repeat; }
        .playhead svg { display: block; }
        .gap { background: var(--panel); border-right: 1px solid var(--line); }
        .vscroll { background: #303135; border-right: 1px solid var(--line); }
        .foot { background: #2d2e32; }
        .foot.first { border-right: 1px solid var(--line); }
        .foot.last { border-right: 1px solid var(--line); background: var(--bar); }
        .hthumb { width: 50%; height: 10px; border: 1px solid var(--line); border-radius: 5px; background: #5b5e66; }`;
    }

    markup() {
        let ticks = "";
        for (let i = 1; i < 24; i++) {
            ticks += `M${i * 8}.500 0v${i == 12 ? 14 : 10}`;
        }
        const cell = t => `<div class="cell"><svg width="193" height="11" fill="none"><path d="${ticks}" stroke="#55565b"/><path d="M.5 0v24" stroke="#77777a"/></svg><span>${t}</span></div>`;
        return `
        <div class="clock">01:00:00:00</div>
        <div class="ruler">${["01:00:00:00", "01:02:18:00", "01:04:36:00", "01:06:54:00", "01:09:12:00", "01:11:30:00"].map(cell).join("")}</div>
        <div class="gap"></div>

        <div class="heads">
            <div><track-header kind="video" tag="V1" name="ビデオ 1" count="0 クリップ"></track-header></div>
            <div class="splitter"></div>
            <div>
                <track-header kind="audio" tag="A1" name="オーディオ 1" count="1 クリップ" target></track-header>
                <track-header kind="audio" tag="A2" name="オーディオ 2" count="1 クリップ"></track-header>
            </div>
        </div>
        <div class="lanes">
            <div></div>
            <div class="splitter"></div>
            <div class="audio">
                <div class="selection">
                    <audio-clip wave="voice" label="Record_2020-11-07-15-42-46.mp3"></audio-clip>
                    <audio-clip wave="quiet" label="IMG_0440.mp3"></audio-clip>
                    <div class="frame"></div>
                </div>
            </div>
        </div>
        <div class="vscroll"><div></div><div class="splitter"></div></div>

        <div class="foot first"></div>
        <div class="foot"><div class="hthumb"></div></div>
        <div class="foot last"></div>
        <div class="playhead"><svg width="15" height="13"><path d="M0 0h15v6l-7 7-8-7z" fill="#e64b3d"/></svg></div>`;
    }
}

class AudioMixer extends BaseElement {
    styles() {
        return `
        :host { display: flex; flex-direction: column; background: var(--panel); border-bottom: 1px solid var(--line); min-height: 0; overflow: hidden; }
        header { display: flex; align-items: center; justify-content: space-between; height: 29px; padding-left: 8px; background: var(--bar); border-bottom: 1px solid var(--line); flex: none; }
        h2 { color: var(--bright); }
        button { width: 36px; height: 28px; border-left: 1px solid var(--line); color: #858587; }
        .strips { display: grid; grid-template-columns: repeat(3, minmax(0, 1fr)); grid-template-rows: minmax(0, 1fr); flex: 1; min-height: 0; }`;
    }

    markup() {
        return `
        <header><h2>ミキサー</h2><button aria-label="オプション"><ui-icon name="dots"></ui-icon></button></header>
        <div class="strips"><slot></slot></div>`;
    }
}

class MixerStrip extends BaseElement {
    styles() {
        return `
        :host { display: flex; flex-direction: column; border-right: 1px solid var(--line); border-top: 3px solid var(--green); min-height: 0; color: #7d8087; }
        :host([main]) { border-top-color: #eab020; border-right: 0; }
        .row { display: flex; align-items: center; justify-content: center; background: var(--bar); border-bottom: 1px solid var(--line); flex: none; }
        .tag { height: 25px; color: #d9d9db; font-weight: 600; }
        .eq { height: 25px; gap: 3px; justify-content: flex-end; padding-right: 7px; font: italic bold 11px "Open Sans", sans-serif; color: #14cbe0; }
        .pan { height: 79px; background: var(--panel); }
        .name { height: 24px; color: var(--bright); font-size: 11px; white-space: nowrap; }
        :host([main]) .name { font-weight: 600; }
        :host([selected]) .name { color: #eab020; }
        .sm { height: 28px; gap: 10px; background: var(--panel); }
        .sm button { width: 17px; height: 17px; border: 1px solid #85858a; border-radius: 2px; color: #8b8b8d; font-size: 11px; font-weight: 600; }
        .level { height: 17px; padding-left: 9px; font-size: 11px; color: #d0d0d2; flex: none; }
        .desk { display: flex; align-items: flex-start; flex: 1; min-height: 0; padding-left: 4px; }
        .fader { appearance: none; writing-mode: vertical-lr; direction: rtl; flex: none; width: 14px; height: 219px; margin-top: 8px; background: linear-gradient(#161618, #161618) 5px 0 / 3px 100% no-repeat; }
        .fader::-webkit-slider-thumb { appearance: none; width: 13px; height: 22px; border: 1px solid #101012; background: linear-gradient(#b9b9bb 0 2px, #8e8e90 2px 9px, #333 9px 10px, #a2a2a4 10px 18px, #77757f 18px); }
        svg { display: block; flex: none; }
        text { font-size: 10px; fill: #6b6e76; }`;
    }

    markup() {
        const main = this.hasAttribute("main");
        const marks = [[0, "0"], [28, "-5"], [55, "-10"], [82, "-15"], [109, "-20"], [153, "-30"], [186, "-40"], [202, "-50"]];
        const scale = marks.map(([y, t]) => `<text x="15" y="${y + 12}" text-anchor="end">${t}</text><path d="M18 ${y + 8}.500h2" stroke="#7d8087"/>`).join("");
        const ticks = [0, 117, 147, 161, 176, 191, 198, 206, 209, 213, 218].map(y => `<path d="M0 ${y + 8}.500h4" stroke="#6b6e76"/>`).join("");
        const pan = main ? "" : `
            <svg width="58" height="66"><rect x=".5" y=".5" width="56" height="56" rx="3" fill="#222126" stroke="#0b0b0d"/><path d="M28.500 1v56M1 28.500h56" stroke="#38383d"/><circle cx="4" cy="4" r="2.500" fill="#97cf5c"/><circle cx="53" cy="4" r="2.500" fill="#97cf5c"/><path d="M25 1h5v5h-5z" fill="#35aee3"/><path d="M.5 60.500h56v3H.5z" fill="#1b1b1d" stroke="#0b0b0d"/></svg>`;
        return `
        <div class="row tag">${this.attr("tag")}</div>
        <div class="row eq">EQ<ui-icon name="signal"></ui-icon></div>
        <div class="row pan">${pan}</div>
        <div class="row name">${this.attr("name")}</div>
        <div class="row sm">${main ? "" : "<button>S</button>"}<button>M</button></div>
        <div class="level">0.0</div>
        <div class="desk">
            <svg width="4" height="228">${ticks}<path d="M0 67.500h4" stroke="#fff"/></svg>
            <input class="fader" type="range" value="75" aria-label="${this.attr("tag")}">
            <svg width="38" height="228">${scale}<path d="M22.500.500h14v2h-14zM29.500.500v2M22.500 8.500h14v218h-14zM29.500 8.500v218" fill="none" stroke="#0b0b0d"/></svg>
        </div>`;
    }
}

class PageSwitcher extends BaseElement {
    styles() {
        return `
        :host { display: grid; grid-template-columns: 1fr auto 1fr; background: var(--dark); color: #6e6e70; }
        .brand { display: flex; align-items: center; gap: 9px; padding-left: 25px; font-size: 13px; color: #e6e6e8; }
        .brand ui-icon { color: #fff; }
        nav { display: flex; }
        a { display: flex; width: 118px; margin: 0 1px; align-items: center; justify-content: center; }
        a[aria-current] { background: #000; border-bottom: 2px solid var(--red); }
        .end { display: flex; align-items: center; justify-content: flex-end; gap: 33px; padding-right: 25px; color: #858587; }`;
    }

    markup() {
        const pages = ["pageMedia", "pageCut", "pageEdit", "pageFusion", "pageColor", "pageFairlight", "pageDeliver"];
        return `
        <div class="brand"><ui-icon name="logo"></ui-icon>DaVinci Resolve 16</div>
        <nav>${pages.map(p => `<a href="#${p}" aria-label="${p}" ${p == "pageEdit" ? `aria-current="page"` : ""}><ui-icon name="${p}"></ui-icon></a>`).join("")}</nav>
        <div class="end"><button aria-label="ホーム"><ui-icon name="home"></ui-icon></button><button aria-label="設定"><ui-icon name="gear"></ui-icon></button></div>`;
    }
}

customElements.define("ui-icon", UiIcon);
customElements.define("resolve-app", ResolveApp);
customElements.define("app-menu", AppMenu);
customElements.define("app-toolbar", AppToolbar);
customElements.define("media-thumb", MediaThumb);
customElements.define("media-pool", MediaPool);
customElements.define("effects-library", EffectsLibrary);
customElements.define("timeline-viewer", TimelineViewer);
customElements.define("clip-inspector", ClipInspector);
customElements.define("inspector-section", InspectorSection);
customElements.define("param-row", ParamRow);
customElements.define("eq-graph", EqGraph);
customElements.define("edit-tools", EditTools);
customElements.define("track-header", TrackHeader);
customElements.define("audio-clip", AudioClip);
customElements.define("timeline-editor", TimelineEditor);
customElements.define("audio-mixer", AudioMixer);
customElements.define("mixer-strip", MixerStrip);
customElements.define("page-switcher", PageSwitcher);
</script>
</body>
</html>
